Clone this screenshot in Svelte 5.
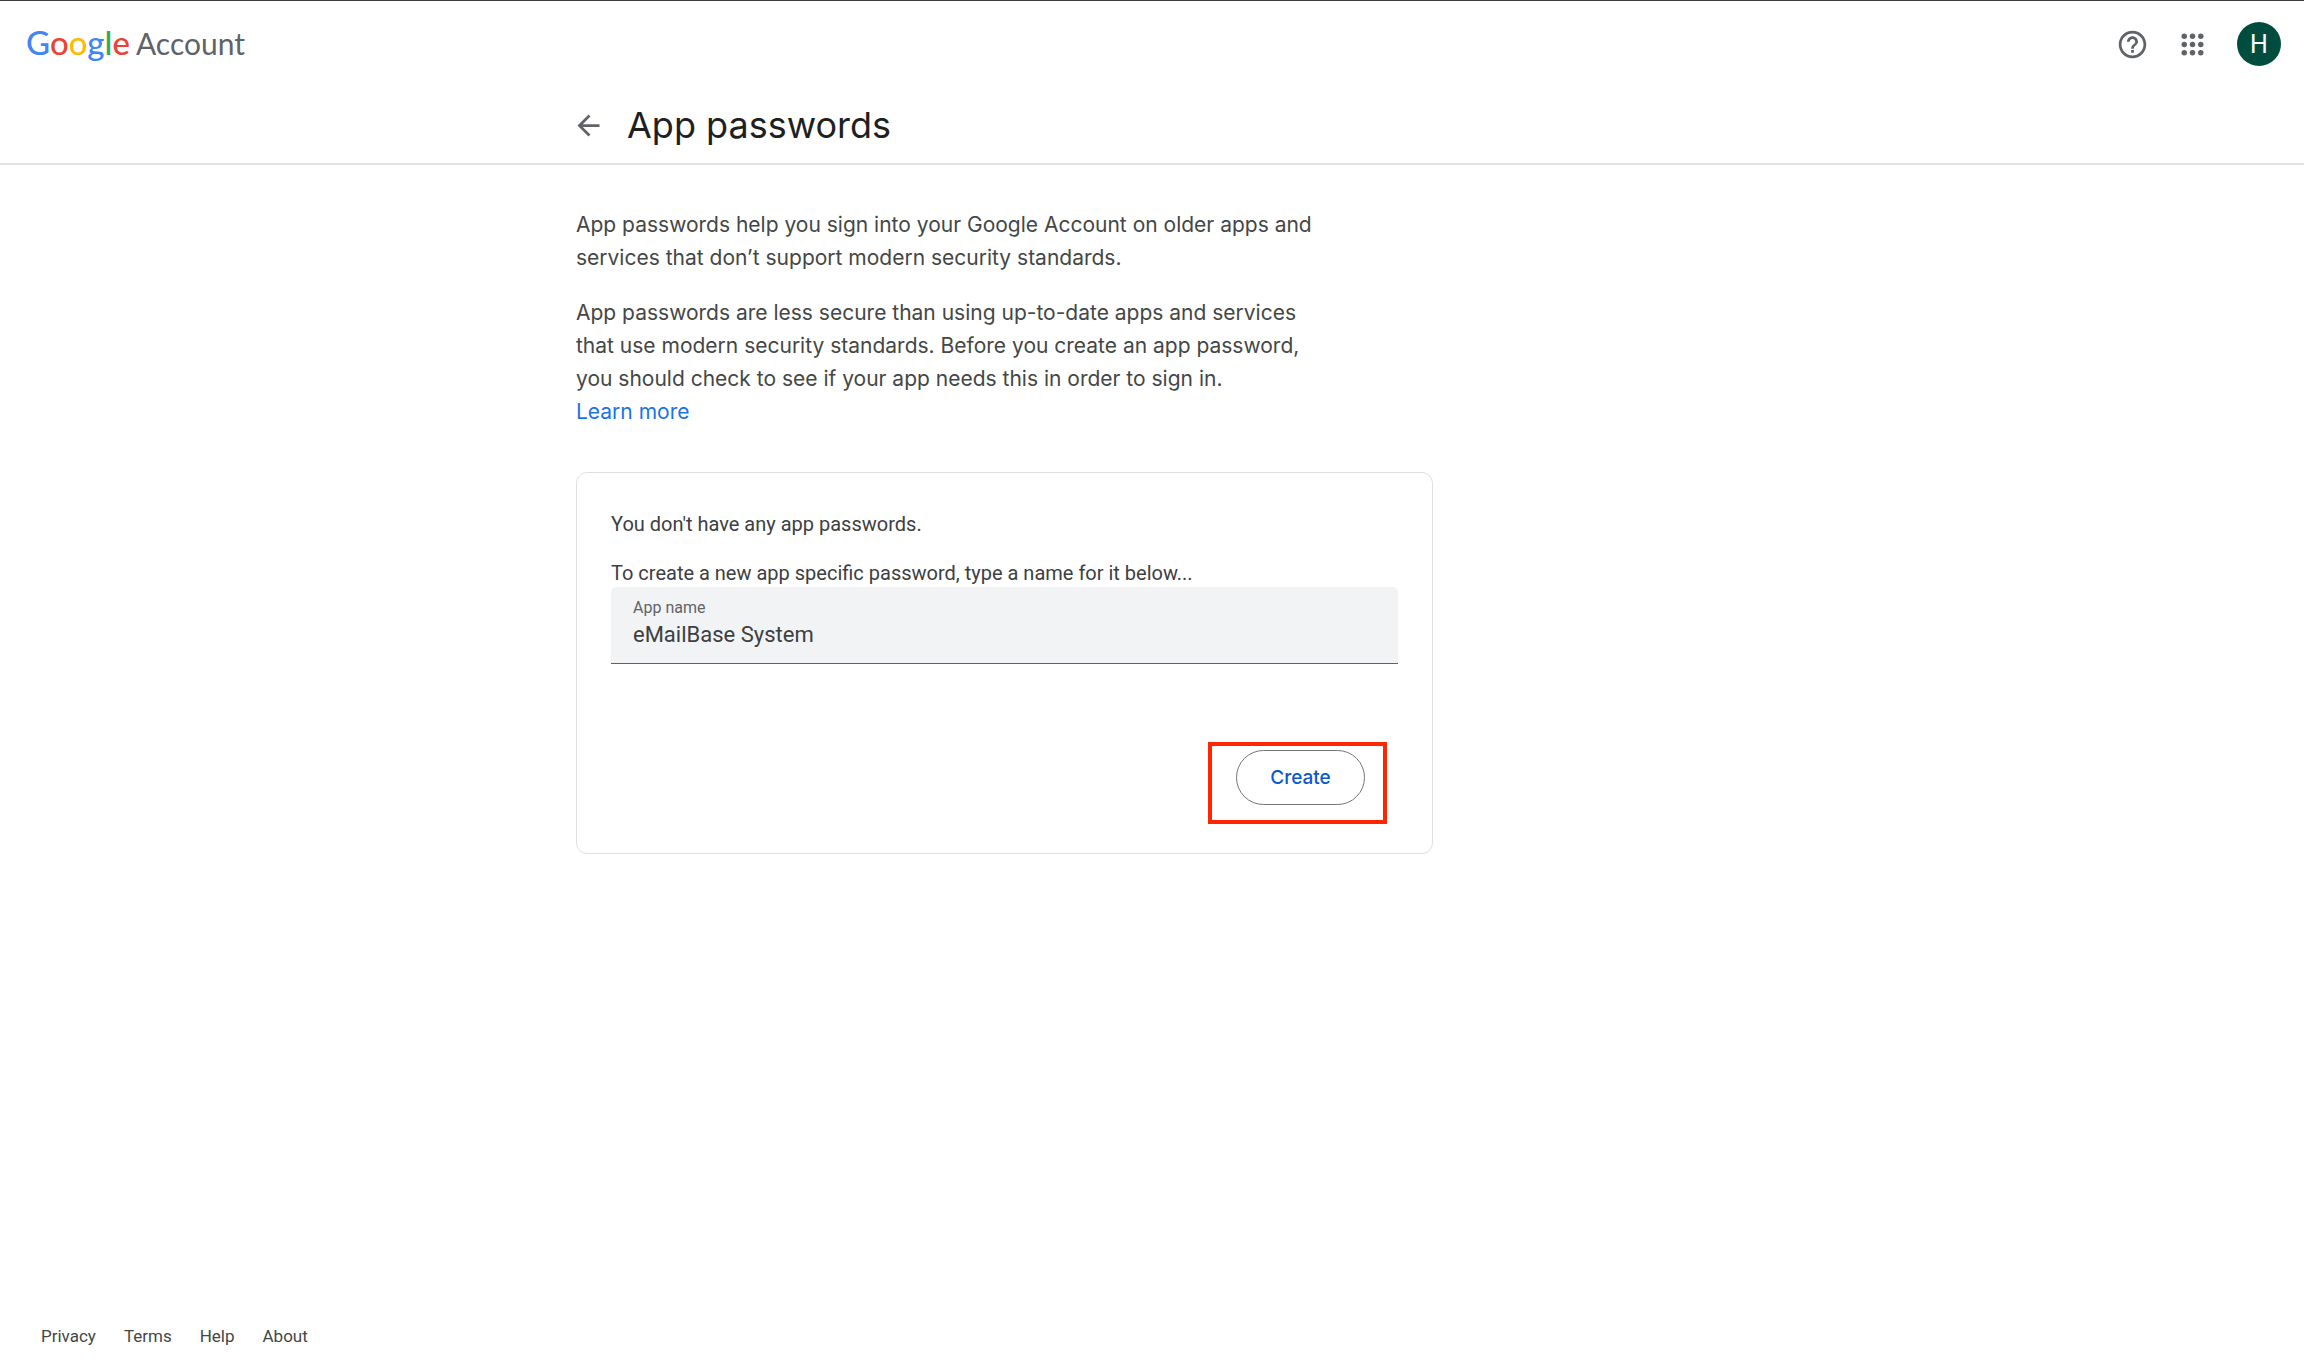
<script lang="ts">
	type LogoLetter = { char: string; tone: 'blue' | 'red' | 'yellow' | 'green' };

	const logo: LogoLetter[] = [
		{ char: 'G', tone: 'blue' },
		{ char: 'o', tone: 'red' },
		{ char: 'o', tone: 'yellow' },
		{ char: 'g', tone: 'blue' },
		{ char: 'l', tone: 'green' },
		{ char: 'e', tone: 'red' }
	];

	const footerLinks = ['Privacy', 'Terms', 'Help', 'About'];
	const dots = [6, 12, 18];

	let appName = $state('eMailBase System');
</script>

<div class="page">
	<header>
		<div class="top-bar">
			<a class="brand" href="#home">
				<span class="logo">{#each logo as letter}<span class={letter.tone}>{letter.char}</span>{/each}</span>
				<span class="product">Account</span>
			</a>

			<div class="actions">
				<button type="button" class="icon-button" aria-label="Help">
					<svg viewBox="0 0 24 24" aria-hidden="true">
						<path
							d="M11 18h2v-2h-2v2zm1-16C6.48 2 2 6.48 2 12s4.48 10 10 10 10-4.48 10-10S17.52 2 12 2zm0 18c-4.41 0-8-3.59-8-8s3.59-8 8-8 8 3.59 8 8-3.59 8-8 8zm0-14c-2.21 0-4 1.79-4 4h2c0-1.1.9-2 2-2s2 .9 2 2c0 2-3 1.75-3 5h2c0-2.25 3-2.5 3-5 0-2.21-1.79-4-4-4z"
						/>
					</svg>
				</button>
				<button type="button" class="icon-button" aria-label="Google apps">
					<svg viewBox="0 0 24 24" aria-hidden="true">
						{#each dots as cy}
							{#each dots as cx}
								<circle {cx} {cy} r="2" />
							{/each}
						{/each}
					</svg>
				</button>
				<button type="button" class="avatar" aria-label="Account: H">H</button>
			</div>
		</div>

		<div class="title-bar column">
			<a class="back" href="#security" aria-label="Back">
				<svg viewBox="0 0 24 24" aria-hidden="true">
					<path d="M20 11H7.83l5.59-5.59L12 4l-8 8 8 8 1.41-1.41L7.83 13H20v-2z" />
				</svg>
			</a>
			<h1>App passwords</h1>
		</div>
	</header>

	<main class="column">
		<div class="intro">
			<p>
				App passwords help you sign into your Google Account on older apps and<br />
				services that don’t support modern security standards.
			</p>
			<p>
				App passwords are less secure than using up-to-date apps and services<br />
				that use modern security standards. Before you create an app password,<br />
				you should check to see if your app needs this in order to sign in.<br />
				<a href="#learn-more">Learn more</a>
			</p>
		</div>

		<form class="card" onsubmit={(event) => event.preventDefault()}>
			<p>You don't have any app passwords.</p>
			<p>To create a new app specific password, type a name for it below...</p>

			<div class="field">
				<label for="app-name">App name</label>
				<input id="app-name" type="text" autocomplete="off" bind:value={appName} />
			</div>

			<div class="highlight">
				<button type="submit" class="create">Create</button>
			</div>
		</form>
	</main>

	<footer>
		{#each footerLinks as link}
			<a href="#{link.toLowerCase()}">{link}</a>
		{/each}
	</footer>
</div>

<style>
	:global(body) {
		background: #fff;
	}

	.page {
		box-sizing: border-box;
		display: flex;
		flex-direction: column;
		min-height: 100vh;
		border-top: 1px solid #3c3c3e;
		color: #444746;
		font-family: Roboto, sans-serif;
	}

	a {
		color: inherit;
		text-decoration: none;
	}

	svg {
		display: block;
		width: 33px;
		height: 33px;
		fill: #5f6368;
	}

	header {
		border-bottom: 2px solid #e1e1e6;
	}

	.top-bar {
		display: flex;
		align-items: center;
		justify-content: space-between;
		height: 86px;
		padding: 0 23px 0 26px;
	}

	.brand {
		display: flex;
		align-items: baseline;
		gap: 6px;
		padding-bottom: 4px;
		font-family: Lato, sans-serif;
	}

	.logo {
		font-size: 33px;
		font-weight: 500;
	}

	.product {
		color: #5f6368;
		font-size: 30px;
	}

	.blue {
		color: #4285f4;
	}

	.red {
		color: #ea4335;
	}

	.yellow {
		color: #fbbc05;
	}

	.green {
		color: #34a853;
	}

	.actions {
		display: flex;
		align-items: center;
	}

	button {
		font-family: inherit;
		cursor: pointer;
	}

	.icon-button {
		margin-right: 3px;
		padding: 12px;
		border: 0;
		border-radius: 50%;
		background: none;
	}

	.avatar {
		width: 44px;
		height: 44px;
		margin-left: 13px;
		padding: 0;
		border: 0;
		border-radius: 50%;
		background: #004d40;
		color: #fff;
		font-size: 25px;
	}

	.column {
		box-sizing: border-box;
		width: 50%;
		margin: 0 auto;
	}

	.title-bar {
		display: flex;
		align-items: center;
		gap: 22px;
		height: 76px;
	}

	.back {
		margin-left: -4px;
	}

	h1 {
		margin: 0;
		color: #1f1f1f;
		font-family: Inter, sans-serif;
		font-size: 36px;
		font-weight: 400;
		line-height: 48px;
	}

	main {
		flex: 1;
		padding-top: 43px;
	}

	.intro {
		font-family: Inter, sans-serif;
		font-size: 21px;
		line-height: 33px;
	}

	.intro p {
		margin: 0 0 22px;
	}

	.intro a {
		color: #1a73e8;
	}

	.card {
		box-sizing: border-box;
		max-width: 857px;
		margin-top: 44px;
		padding: 38px 34px 29px;
		border: 1px solid #dfe0e2;
		border-radius: 11px;
	}

	.card p {
		margin: 0 0 22px;
		color: #3c4043;
		font-size: 20px;
		line-height: 27px;
	}

	.card p + p {
		margin-bottom: 0;
	}

	.field {
		display: flex;
		flex-direction: column;
		box-sizing: border-box;
		height: 77px;
		padding: 10px 22px 0;
		border-bottom: 1px solid #5f6368;
		border-radius: 5px 5px 0 0;
		background: #f1f3f4;
	}

	label {
		color: #5f6368;
		font-size: 16px;
		line-height: 22px;
	}

	input {
		width: 100%;
		height: 30px;
		padding: 0;
		border: 0;
		outline: 0;
		background: none;
		color: #3c4043;
		font-family: inherit;
		font-size: 22px;
	}

	/* red frame drawn round the submit button */
	.highlight {
		width: fit-content;
		margin: 78px 11px 0 auto;
		padding: 4px 18px 15px 24px;
		border: 4px solid #ff2600;
	}

	.create {
		display: block;
		width: 129px;
		height: 55px;
		border: 1px solid #747775;
		border-radius: 28px;
		background: #fff;
		color: #0b57d0;
		font-family: Inter, sans-serif;
		font-size: 19px;
		font-weight: 500;
	}

	footer {
		display: flex;
		gap: 28px;
		padding: 0 41px 21px;
		font-size: 17px;
		line-height: 24px;
	}
</style>
